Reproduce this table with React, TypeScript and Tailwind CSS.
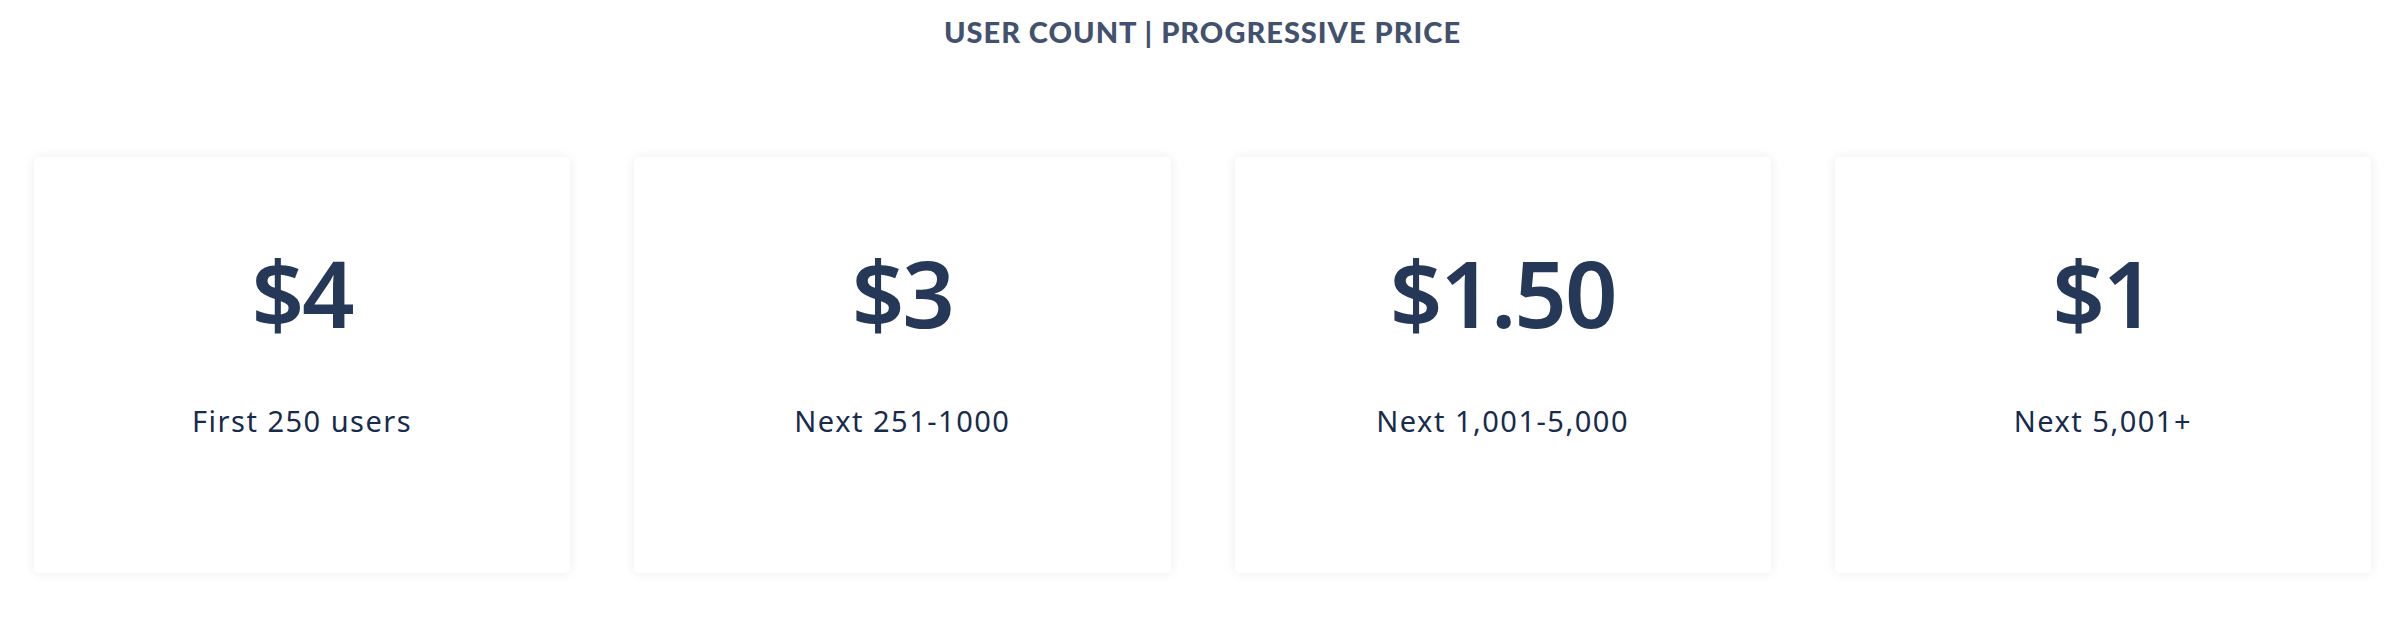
const tiers = [
  { price: "$4", label: "First 250 users" },
  { price: "$3", label: "Next 251-1000" },
  { price: "$1.50", label: "Next 1,001-5,000" },
  { price: "$1", label: "Next 5,001+" },
];

const PriceCard = ({ price, label }: { price: string; label: string }) => {
  return (
    <div className="h-[416px] bg-white rounded-[5px] shadow-[0_0_12px_rgba(9,30,66,0.08)] flex flex-col items-center pt-[90px]">
      <div className="font-['Noto_Sans',sans-serif] text-[92px] leading-none font-semibold tracking-[-2px] text-[#253858]">
        {price}
      </div>
      <div className="mt-[67px] font-['Noto_Sans',sans-serif] text-[29px] leading-none tracking-[1.5px] text-[#172b4d]">
        {label}
      </div>
    </div>
  );
};

export default function App() {
  return (
    <div className="w-[2390px] h-[638px] bg-white pl-[34px] pr-[19px]">
      {/* Heading */}
      <h2 className="pt-[17px] text-center font-['Lato',sans-serif] font-black text-[29px] leading-none tracking-[1px] text-[#42526e]">
        USER COUNT | PROGRESSIVE PRICE
      </h2>

      {/* Tier cards */}
      <div className="mt-[111px] grid grid-cols-4 gap-[64px]">
        {tiers.map((t) => (
          <PriceCard key={t.price} price={t.price} label={t.label} />
        ))}
      </div>
    </div>
  );
}
